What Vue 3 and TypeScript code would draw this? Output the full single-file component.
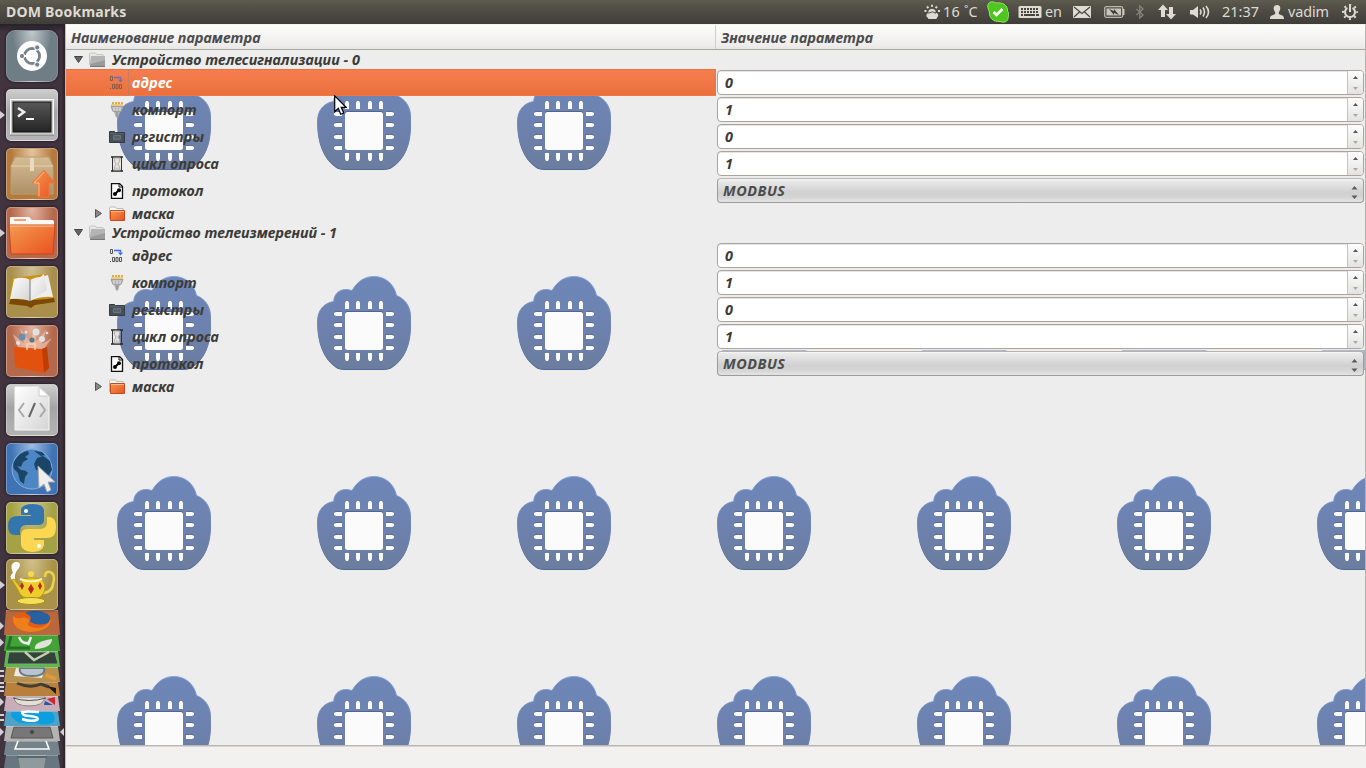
<script setup lang="ts">
import { ref } from 'vue'

interface Param {
  label: string
  width: number
  icon: string
  value: string
  kind: 'spin' | 'combo'
}
interface Group {
  title: string
  width: number
  params: Param[]
}

const makeParams = (): Param[] => [
  { label: 'адрес', width: 40.5, icon: 'address', value: '0', kind: 'spin' },
  { label: 'компорт', width: 64.5, icon: 'port', value: '1', kind: 'spin' },
  { label: 'регистры', width: 72, icon: 'registers', value: '0', kind: 'spin' },
  { label: 'цикл опроса', width: 87, icon: 'cycle', value: '1', kind: 'spin' },
  { label: 'протокол', width: 71.5, icon: 'protocol', value: 'MODBUS', kind: 'combo' },
]

const groups = ref<Group[]>([
  { title: 'Устройство телесигнализации - 0', width: 248, params: makeParams() },
  { title: 'Устройство телеизмерений - 1', width: 225, params: makeParams() },
])
const selected = ref('0-0')

// Spreads a label over the given width by adjusting its letter spacing.
const vFit = {
  mounted(el: HTMLElement, binding: { value: number }) {
    const count = (el.textContent ?? '').trim().length
    const natural = el.getBoundingClientRect().width
    if (count > 0) el.style.letterSpacing = `${(binding.value - natural) / count}px`
  },
}

const pinOffsets = [30, 41, 53, 64]
const sidePins = [38, 49, 61, 72]
</script>

<template>
  <div class="desktop">
    <header class="panel">
      <span v-fit="120.5" class="app-name">DOM Bookmarks</span>
      <div class="indicators">
        <svg class="weather" width="17" height="16" viewBox="0 0 17 16" fill="#dfdbd2">
          <path d="M3.5 13.5a2.4 2.4 0 0 1 .8-4.4 3.6 3.6 0 0 1 6.8-.3 2.6 2.6 0 0 1 2 4.7l-.8 1.5H4.5z" />
          <path d="M4 7.500a4.300 4.300 0 0 1 8 0l-1.500.8a3 3 0 0 0-5 0z" />
          <path d="M8 .8v2M3 2.500l1.400 1.600M13 2.500l-1.400 1.600M.5 7h2M14 7h2" stroke="#dfdbd2" stroke-width="2" />
          <path d="M4.500 9.300q4-3 7.500 0" stroke="#504e47" stroke-width="1" fill="none" />
        </svg>
        <span v-fit="35" class="temp">16 ˚C</span>
        <svg class="skype" width="22" height="22" viewBox="0 0 22 22">
          <path d="M1 7C-.5 1 5-.5 9 2c6-1 12 2 11.500 8 2 2 1 5 .5 7 0 4-4 5-8 3.500C6 21 2 17 2.400 11Z" fill="#4fc61f" stroke="#8de75f" />
          <path d="m6.500 11 3 3 6-6" fill="none" stroke="#fff" stroke-width="2.600" />
        </svg>
        <svg class="keyboard" width="24" height="14" viewBox="0 0 24 14">
          <rect x=".5" y="1" width="23" height="12" rx="1.5" fill="#dfdbd2" />
          <path d="M3 4h18M3 7h18" stroke="#45433e" stroke-width="2" stroke-dasharray="2 1" />
          <path d="M3 10h2M6 10h11M18 10h3" stroke="#45433e" stroke-width="2" />
        </svg>
        <span v-fit="17" class="lang">en</span>
        <svg class="mail" width="18" height="12" viewBox="0 0 18 12">
          <rect width="18" height="12" rx=".8" fill="#dfdbd2" />
          <path d="m1 1 8 6.500L17 1M1 11l5.500-5M17 11l-5.500-5" fill="none" stroke="#45433e" stroke-width="1.100" />
        </svg>
        <svg class="battery" width="21" height="12" viewBox="0 0 21 12">
          <rect x=".7" y=".7" width="18" height="10.600" rx="1.500" fill="none" stroke="#bab6ac" stroke-width="1.300" />
          <rect x="2.500" y="2.500" width="14.500" height="7" fill="#c9c5bb" />
          <path d="M19 3h1.500v6H19z" fill="#c9c5bb" />
          <path d="m5 3 5 2V3l5 6-5-2v2z" fill="#3f3e39" />
        </svg>
        <svg class="bluetooth" width="8" height="14" viewBox="0 0 8 14">
          <path d="m.5 4 6.500 6-3.200 3V1L7 4 .5 10" fill="none" stroke="#87847b" stroke-width="1.300" />
        </svg>
        <svg class="network" width="18" height="16" viewBox="0 0 18 16" fill="#dfdbd2">
          <path d="M5 .5 10 6H7v7H3V6H0zM11 3h4v7h3l-5 5.500L8 10h3z" />
        </svg>
        <svg class="sound" width="20" height="14" viewBox="0 0 20 14">
          <path d="M0 5h3l5-4v12L3 9.500H0z" fill="#dfdbd2" />
          <path d="M10 4.500q2 2.500 0 5M13 2.500q3 4.500 0 9M16 1q5 6 0 12" fill="none" stroke="#dfdbd2" stroke-width="1.600" />
        </svg>
        <span v-fit="37" class="clock">21:37</span>
        <svg class="person" width="14" height="14" viewBox="0 0 14 14" fill="#dfdbd2">
          <path d="M7 0c4 0 4 4 2 7-.8 1.500 0 2.500 2 3s3 1.500 3 4H0c0-2.500 1-3.500 3-4s2.800-1.500 2-3C3 4 3 0 7 0z" />
        </svg>
        <span v-fit="41" class="user">vadim</span>
        <svg class="gear" width="16" height="16" viewBox="0 0 16 16" fill="none" stroke="#dfdbd2">
          <circle cx="8" cy="8" r="7" stroke-width="2" stroke-dasharray="2 3.500" stroke-dashoffset="1" />
          <path d="M5.400 3.800a5 5 0 1 0 5.200 0" stroke-width="2" />
          <path d="M8 0v8" stroke-width="2" />
        </svg>
      </div>
    </header>

    <div class="workspace">
      <nav class="launcher">
        <svg width="0" height="0" class="defs">
          <defs>
            <linearGradient id="orange" x1="0" y1="0" x2="1" y2="1">
              <stop offset="0" stop-color="#f39a50" />
              <stop offset="1" stop-color="#eb5121" />
            </linearGradient>
            <linearGradient id="box" x2="0" y2="1">
              <stop offset="0" stop-color="#d6bd95" />
              <stop offset="1" stop-color="#ae9065" />
            </linearGradient>
            <linearGradient id="screen" x2="0" y2="1">
              <stop offset="0" stop-color="#585858" />
              <stop offset="1" stop-color="#242424" />
            </linearGradient>
            <linearGradient id="page" x2="1" y2="1">
              <stop offset="0" stop-color="#fff" />
              <stop offset="1" stop-color="#d4d4d4" />
            </linearGradient>
          </defs>
        </svg>

        <div class="tile ubuntu">
          <svg viewBox="0 0 52 52">
            <circle cx="26" cy="26" r="15" fill="#fff" />
            <circle cx="26" cy="26" r="7.500" fill="none" stroke="#75838b" stroke-width="3" />
            <path d="M26 26H13M26 26l6.500 11M26 26l6.500-11" stroke="#fff" stroke-width="2" />
            <circle cx="26" cy="26" r="6" fill="#fff" />
            <g fill="#75838b" stroke="#fff">
              <circle cx="16" cy="26" r="2.600" /><circle cx="31.200" cy="17.400" r="2.600" /><circle cx="31.200" cy="34.600" r="2.600" />
            </g>
          </svg>
        </div>
        <div class="tile silver running">
          <svg viewBox="0 0 52 52">
            <rect x="4.500" y="10.500" width="43" height="35" fill="#c9c9c9" stroke="#f8f8f8" />
            <path d="M4 46h44" stroke="#777" />
            <rect x="7" y="13" width="38" height="30" fill="url(#screen)" stroke="#111" />
            <path d="m12 19 6 4-6 4.500" fill="none" stroke="#eee" stroke-width="2.600" />
            <path d="M20 30h8" stroke="#fff" stroke-width="2" />
          </svg>
        </div>
        <div class="tile amber">
          <svg viewBox="0 0 52 52">
            <path d="M9 9h34l4 9v28H5V18z" fill="url(#box)" stroke="#bba074" />
            <path d="M5 18h42" stroke="#e6d2ae" />
            <path d="M24 10h4v13h-4z" fill="#e9dac0" />
            <path d="M38 22 49 35h-6v14H32V35h-6z" fill="url(#orange)" stroke="#ef7643" />
            <path d="M38 24 28 35h5v13" fill="none" stroke="#fcba87" />
          </svg>
        </div>
        <div class="tile rust running">
          <svg viewBox="0 0 52 52">
            <path d="M4 22V11q0-1 1-1h18l3 3h20q2 0 2 2v7z" fill="#f8f7f5" />
            <path d="M8 13h12" stroke="#f5a26e" stroke-width="2" />
            <path d="M3 18h46l-2 29H5z" fill="url(#orange)" stroke="#c94616" />
            <path d="M4 19h44" stroke="#fac38e" />
          </svg>
        </div>
        <div class="tile gold">
          <svg viewBox="0 0 52 52">
            <path d="m6 12 18-2 16-2 9 27-18 4-5 3-5-3-18-1z" fill="#c8930e" />
            <path d="M5 32q11 2 19 2t24-2l1 4-20 3-4 3-4-2-18-2z" fill="#7a4a05" />
            <path d="M8 13q10-3 16 1v21q-8-3-20-2z" fill="url(#page)" />
            <path d="M24 14q5-3 10-3l8-2 5 22q-13-1-23 4z" fill="#eee" />
            <path d="M24 20 38 8l3 16-17 11z" fill="url(#page)" />
            <path d="M24 14v21" stroke="#777" />
          </svg>
        </div>
        <div class="tile rust">
          <svg viewBox="0 0 52 52">
            <path d="M12 22 7 9l11 9-4-15 10 14 5-14 1 14 10-12-4 14 10-6-9 12z" fill="#f5cbb7" opacity=".6" />
            <g fill="#dfe2e3">
              <circle cx="16" cy="12" r="3.500" fill="#6690ad" /><circle cx="30" cy="7" r="3.500" /><circle cx="36" cy="14" r="3" />
              <circle cx="26" cy="15" r="2.500" fill="#58778c" /><circle cx="20" cy="7" r="1.500" /><circle cx="41" cy="8" r="1.300" /><circle cx="12" cy="18" r="2" />
            </g>
            <path d="m8 22 28 2 5-2 2 21-5 5-29-6z" fill="#e2520e" />
            <path d="m36 24 5-2 2 21-5 5z" fill="#be3e07" />
            <path d="M21 25v-6h8v6" fill="none" stroke="#ffd1b0" stroke-width="1.500" />
          </svg>
        </div>
        <div class="tile silver">
          <svg viewBox="0 0 52 52">
            <path d="M9 3h24l10 9v34H9z" fill="url(#page)" stroke="#f8f8f8" />
            <path d="M33 3v9h10z" fill="#fff" stroke="#ccc" />
            <path d="m18 19-5 7 5 7M34 19l5 7-5 7" fill="none" stroke="#aaa" stroke-width="2" />
            <path d="m29 19-6 14" stroke="#666" stroke-width="2" />
          </svg>
        </div>
        <div class="tile blue">
          <svg viewBox="0 0 52 52">
            <circle cx="26" cy="26" r="20" fill="#4d86c4" stroke="#83afdc" />
            <path d="M9 17q5-8 13-9l1 3-4 3 3 2-5 3-2 5-4-1 4 4q5 0 7 3l-3 4-1 7-4-3-2-8-4-4q-2-5 1-9zM28 8l8 1 3 3-4 1zM31 15l6-2 7 5 2 9-4 6-4 3-2-8-6-1-2-6z" fill="#1b4567" />
            <path d="m32 23 1 22 5-4 3 8 4-2-3-8h7z" fill="#eee" stroke="#aaa" />
          </svg>
        </div>
        <div class="tile olive">
          <svg viewBox="0 0 52 52">
            <path d="M15 13V7q2-5 12-5t11 6v10q0 5-6 5H20q-6 0-6 7v3H9q-7 0-7-9 0-10 9-10h14v-1z" fill="#3575ad" />
            <path d="M15 33q0-6 7-6h12q7 0 7-7v-5h3q6 1 6 10 0 11-8 11H28v2h10v5q-1 7-12 7-10-1-11-7z" fill="#fdd652" />
            <circle cx="20" cy="9" r="2" fill="#fff" /><circle cx="33" cy="44" r="2" fill="#fff" />
          </svg>
        </div>
        <div class="tile mustard running">
          <svg viewBox="0 0 52 52">
            <path d="M7 22q-5-5 0-8-4-9 2-11 7-1 4 6-5 5-4 12z" fill="#fff" />
            <path d="M39 18q0-6 5-5 6 2 3 12-1 9-12 9" fill="none" stroke="#ebd34d" stroke-width="2.500" />
            <path d="m6 21 2-1 6 8q0-9 9-9h5q12 0 11 11-2 10-13 10-11 0-14-9z" fill="#eccd2c" stroke="#bd9a16" />
            <ellipse cx="25" cy="42" rx="14" ry="3.500" fill="#f5df58" stroke="#ac8d17" />
            <path d="M14 20q11 5 22 0" fill="none" stroke="#fff5a8" stroke-width="2" />
            <circle cx="25" cy="15" r="3" fill="#f1d950" />
            <path d="m16 23 2 4-2 4-2-4zM25 25l3 5-3 5-3-5zM34 23l2 4-2 4-2-4z" fill="#bd271c" />
          </svg>
        </div>

        <svg class="folded" width="65" height="158" viewBox="0 0 65 158">
          <path d="M6 0h52l2 25H4z" fill="#b9683e" />
          <ellipse cx="32" cy="11" rx="20" ry="10" fill="#e65c14" />
          <path d="M25 3q10-5 23 1 7 9-4 10-8 2-15-3 5-4-4-8z" fill="#2761a0" />
          <path d="M13 6q5 4 11 1 5 2 6 4-4 3-1 5 8 4 16 0 4-3 6-8 0 13-20 14Q12 21 13 6z" fill="#ee7f1d" />

          <path d="M6 25h52l2 16H4z" fill="#43a336" />
          <path d="m11 26-3 12h22" fill="none" stroke="#247024" stroke-width="3" />
          <path d="M19 27q3 7 9 6M31 27l-3 8" fill="none" stroke="#eee" stroke-width="2.500" />
          <path d="M35 39q-2-7 17-10 0 9-17 10z" fill="#dfe3d8" />

          <path d="M6 41h52l2 16H4z" fill="#4ac43d" />
          <path d="M9 42h46l3 12H7z" fill="#32443a" stroke="#8e998d" />
          <path d="m25 42 9 8 15-8" fill="none" stroke="#c2d0b2" stroke-width="2.500" />

          <path d="M6 57h52l2 15H4z" fill="#b7924e" />
          <path d="m16 58-2 8 28 2 2-8z" fill="#ecebe1" />
          <path d="M20 58q-2 8 12 8t12-8z" fill="#bac4cd" stroke="#6b7882" stroke-width="2" />
          <path d="m46 65 10 4" stroke="#e49735" stroke-width="4" />

          <path d="M6 72h52l2 14H4z" fill="#b87f3d" />
          <path d="M17 73q13 6 24 1l8 3" fill="none" stroke="#403e35" stroke-width="3" />
          <path d="m47 76 9 2v6z" fill="#181b19" />

          <path d="M6 86h52l2 15H4z" fill="#c9adb8" />
          <path d="M14 87h31q-1 9-16 9t-15-9z" fill="#e1dfd6" stroke="#8d8488" />
          <path d="M13 88q16 5 33 0" stroke="#555" fill="none" />
          <path d="m47 89 8-2v8z" fill="#cf2431" /><path d="m45 91 8 4h-9z" fill="#2357a0" />

          <path d="M6 101h52l2 15H4z" fill="#51a2c6" />
          <path d="M12 102h40q6 7 0 11-9 3-15 0-18 2-22-3-6-4-3-8z" fill="#0b9fe0" />
          <path d="M39 102q-12-1-17 0 0 4 8 4 10 1 7 4-7 2-15-1" fill="none" stroke="#fff" stroke-width="2.500" />

          <path d="M6 116h52l2 15H4z" fill="#b4b3b2" />
          <path d="M14 117h36l3 11H11z" fill="#777" stroke="#575757" />
          <circle cx="32" cy="122" r="2" fill="#444" />
          <path d="M6 131h52l2 14H4z" fill="#74838a" />
          <path d="m18 131-3 8h34l-3-8" fill="none" stroke="#fff" stroke-width="1.600" />
          <path d="M6 145h52l2 13H4z" fill="#68777f" />
          <path d="M18 145h28l-2 13H20z" fill="#8f999e" /><path d="M17 147h30" stroke="#59666c" stroke-width="2" />
          <path d="M6 .5h52M6 25.500h52M6 41.500h52M6 57.500h52M6 72.500h52M6 86.500h52M6 101.500h52M6 116.500h52M6 131.500h52M6 145.500h52" stroke="#fff" stroke-opacity=".25" />
          <g fill="#d3d0d5">
            <path d="m0 12 4 4-4 4zM0 28.500l4 4-4 4zM0 88l4 4-4 4zM0 118l4 4-4 4zM64 118l-4 4 4 4z" />
            <path d="M0 60h4v2H0zM0 65h4v2H0zM0 72h4v2H0zM0 76h4v2H0zM0 80h4v2H0zM0 104h4v2H0zM0 109h4v2H0z" />
          </g>
        </svg>
      </nav>

      <main class="window">
        <div class="tree-head">
          <div class="head-cell first"><span v-fit="189.5">Наименование параметра</span></div>
          <div class="head-cell"><span v-fit="152">Значение параметра</span></div>
        </div>

        <div class="tree-body">
          <svg class="backdrop" width="1299" height="695">
            <defs>
              <linearGradient id="cloud" x2="0" y2="1">
                <stop offset="0" stop-color="#6d87b8" />
                <stop offset=".45" stop-color="#6d82b0" />
                <stop offset="1" stop-color="#6b7d9f" />
              </linearGradient>
              <linearGradient id="cloudEdge" x2="0" y2="1">
                <stop offset="0" stop-color="#8aa4da" />
                <stop offset=".45" stop-color="#7289ba" />
                <stop offset="1" stop-color="#526894" />
              </linearGradient>
              <pattern id="tiles" x="51" y="26" width="200" height="200" patternUnits="userSpaceOnUse">
                <path d="M.5 46C.5 34 7 27 16.700 25.500 17 17 24 11 35 14.500 41 4 49 .5 57 .5c11 0 20 7 22.500 19C88 23 93.500 30 93.500 41v11C93 70 87 84 74 92q-3 1.500-8 1.500H28q-5 0-8-1.500C7 84 .5 67 .5 46z" fill="url(#cloud)" stroke="url(#cloudEdge)" />
                <rect x="28" y="35" width="38" height="4" rx="2" fill="#53658c" />
                <rect x="28" y="36" width="38" height="38" rx="2.500" fill="#fbfbfb" />
                <g fill="#fbfbfb">
                  <path v-for="x in pinOffsets" :key="'t' + x" :d="`M${x - 2} 33v-6l1-2h2l1 2v6zM${x - 2} 77v6l1 2h2l1-2v-6z`" />
                  <path v-for="y in sidePins" :key="'s' + y" :d="`M25 ${y - 2}h-6l-2 1v2l2 1h6zM69 ${y - 2}h6l2 1v2l-2 1h-6z`" />
                </g>
                <g stroke="#53658c" stroke-opacity=".7">
                  <path v-for="y in sidePins" :key="'e' + y" :d="`M18 ${y - 2.5}h7M69 ${y - 2.5}h7`" />
                </g>
              </pattern>
            </defs>
            <rect width="1299" height="695" fill="url(#tiles)" />
          </svg>

          <div class="rows">
            <template v-for="(group, g) in groups" :key="g">
              <div class="row short">
                <div class="name">
                  <svg class="arrow down" width="9" height="7" viewBox="0 0 9 7"><path d="M.5.5h8L4.500 6.500z" fill="#666" stroke="#444" /></svg>
                  <svg class="folder" width="17" height="16" viewBox="0 0 17 16">
                    <path d="M.5 13V2q0-1 1-1h5l1 1.500H14v2" fill="#e6e6e6" stroke="#c6c6c6" />
                    <path d="M2 4h14v11H1z" fill="#9a9a9a" /><path d="M2 4h14v4L2 12z" fill="#b4b4b4" /><path d="M1 14.500h15" stroke="#777" />
                  </svg>
                  <span v-fit="group.width">{{ group.title }}</span>
                </div>
              </div>
              <div v-for="(p, i) in group.params" :key="i" class="row">
                <div class="name leaf" :class="{ selected: selected === g + '-' + i }" @click="selected = g + '-' + i">
                  <svg class="param-icon" width="16" height="16" viewBox="0 0 16 16">
                    <template v-if="p.icon === 'address'">
                      <path d="M1.500 1.500h2v4h-2z" fill="none" stroke="#555" />
                      <path d="M5 2.500h6.500v2" fill="none" stroke="#3568f0" stroke-width="1.400" /><path d="M9 4.500h5L11.500 7.500z" fill="#3568f0" />
                      <path d="M1 13.500h1M3.500 9.500h2v4h-2zM7 9.500h2v4H7zM10.500 9.500h2v4h-2z" fill="none" stroke="#555" />
                    </template>
                    <template v-else-if="p.icon === 'port'">
                      <path d="M3 1h11" stroke="#e5aa3c" stroke-dasharray="2 1" stroke-width="2" />
                      <path d="M2 2h12v2H2z" fill="#eccb81" /><path d="M2 4.500h12l-2 5H4z" fill="#b8b8b8" stroke="#a0a0a0" />
                      <path d="M5 5v4M8 5v4M11 5v4" stroke="#dedede" /><path d="M5 10h6l-2 5.500H7z" fill="#b4b4b4" /><path d="M8 10v5" stroke="#888" />
                    </template>
                    <template v-else-if="p.icon === 'registers'">
                      <path d="M.5 2.500h5l1 1h9v10H.5z" fill="#485159" stroke="#343c43" />
                      <path d="M1 4.500h14" stroke="#59636b" /><path d="M4.500 6.500h7v4h-7z" fill="#59636a" stroke="#69747a" />
                    </template>
                    <template v-else-if="p.icon === 'cycle'">
                      <path d="M2 1h12M2 15h12" stroke="#222" stroke-width="1.500" />
                      <path d="M3.500 1v14M12.500 1v14" stroke="#333" />
                      <path d="M5 2h6q0 4-2 6 2 2 2 6H5q0-4 2-6-2-2-2-6z" fill="#e4e2d8" stroke="#aaa" />
                      <path d="m6 13 2-2 2 2z" fill="#d4c9a4" />
                    </template>
                    <template v-else>
                      <path d="M2.500.5h8l3 3v12h-11z" fill="#fff" stroke="#111" stroke-width="1.300" />
                      <path d="M10 1v3h3" fill="none" stroke="#111" />
                      <path d="m6 11 4-4" stroke="#000" stroke-width="2" /><circle cx="6" cy="11" r="2" /><circle cx="10" cy="7.300" r="2" />
                    </template>
                  </svg>
                  <span v-fit="p.width">{{ p.label }}</span>
                </div>
                <div class="value" :class="p.kind">
                  <div v-if="p.kind === 'spin'" class="spinbox">
                    <span class="field">{{ p.value }}</span>
                    <span class="steps">
                      <svg width="5" height="3" viewBox="0 0 5 3"><path d="M0 3 2.500 0 5 3z" fill="#555" /></svg>
                      <svg width="5" height="3" viewBox="0 0 5 3"><path d="M0 0h5L2.500 3z" fill="#aaa" /></svg>
                    </span>
                  </div>
                  <div v-else class="combobox">
                    <span v-fit="62.5">{{ p.value }}</span>
                    <svg width="7" height="13" viewBox="0 0 7 13"><path d="M.5 3.500 3.500 0l3 3.500zM.5 9.500h6l-3 3.500z" fill="#5c5c5c" /></svg>
                  </div>
                </div>
              </div>
              <div class="row short">
                <div class="name mask">
                  <svg class="arrow right" width="7" height="9" viewBox="0 0 7 9"><path d="M.5.5v8l6-4z" fill="#888" stroke="#555" /></svg>
                  <svg class="folder" width="17" height="16" viewBox="0 0 17 16">
                    <path d="M.5 13V2q0-1 1-1h5l1 1.500H14v2" fill="#fafafa" stroke="#bbb" />
                    <path d="M1.500 4.500h14v10h-14z" fill="url(#orange)" stroke="#c04b1c" /><path d="M2 5.500h13" stroke="#fabb86" />
                  </svg>
                  <span v-fit="42.5">маска</span>
                </div>
              </div>
            </template>
          </div>
        </div>
        <footer class="status"></footer>
      </main>
    </div>

    <svg class="pointer" width="13" height="21" viewBox="0 0 13 21">
      <path d="M.7.800v16l3.600-3.500 2.400 6 3-1.300-2.500-5.700h4.900z" fill="#fff" stroke="#000" stroke-width="1.200" />
    </svg>
  </div>
</template>

<style>
body {
  overflow: hidden;
}
</style>

<style scoped>
.desktop {
  position: relative;
  display: flex;
  flex-direction: column;
  width: 1366px;
  height: 768px;
  overflow: hidden;
  background: #ededed;
  font-family: "Noto Sans", "Open Sans", sans-serif;
  font-size: 14.4px;
  color: #3c3b37;
}
.desktop * {
  box-sizing: border-box;
}
span {
  white-space: nowrap;
}
svg {
  flex: none;
  display: block;
}
.panel {
  display: flex;
  align-items: center;
  justify-content: space-between;
  flex: none;
  height: 24px;
  padding: 0 8px 0 6px;
  background: linear-gradient(#5d5a4e, #525047 30%, #3e3d38);
  color: #dfdbd2;
}
.app-name {
  font-weight: 700;
  line-height: 24px;
  font-size: 14px;
}
.indicators {
  display: flex;
  align-items: center;
  height: 24px;
}
.indicators span {
  line-height: 24px;
}
.temp { margin-left: 2px; }
.skype { margin-left: 9px; }
.keyboard { margin-left: 9px; }
.lang { margin-left: 3px; }
.mail { margin-left: 11px; }
.battery { margin-left: 13px; }
.bluetooth { margin-left: 11px; }
.network { margin-left: 14px; }
.sound { margin-left: 14px; }
.clock { margin-left: 12px; }
.person { margin-left: 11px; }
.user { margin-left: 4px; }
.gear { margin-left: 13px; }

.workspace {
  display: flex;
  flex: 1;
  min-height: 0;
}
.launcher {
  position: relative;
  display: flex;
  flex-direction: column;
  gap: 7px;
  width: 66px;
  flex: none;
  padding: 6px 0 0 6px;
  background: linear-gradient(#27212a, #41343f 8px, #41343f);
  border-right: 1px solid #c3bebe;
  box-shadow: inset -2px 0 2px #2d232b;
}
.defs {
  position: absolute;
}
.tile {
  position: relative;
  flex: none;
  width: 52px;
  height: 52px;
  border-radius: 5px;
  border: 1px solid rgba(255, 255, 255, 0.3);
  box-shadow: 0 0 2px 1px rgba(25, 15, 25, 0.5);
}
.tile svg {
  width: 52px;
  height: 52px;
  margin: -1px;
}
.tile.ubuntu { background: radial-gradient(ellipse at 50% 0, #c2c9cc, #6f7e86 55%); border-radius: 9px; border-color: rgba(255, 255, 255, 0.15); }
.tile.silver { background: linear-gradient(#cdcdcd, #a4a4a4 45%, #b4b4b4); }
.tile.amber { background: radial-gradient(ellipse at 50% 0, #e5c6a3, #b57a3c 60%); }
.tile.rust { background: radial-gradient(ellipse at 50% 0, #e4b6a3, #b5694c 60%); }
.tile.gold { background: radial-gradient(ellipse at 50% 0, #d2c29a, #aa8e4b 60%); }
.tile.blue { background: radial-gradient(ellipse at 50% 0, #9fbde0, #3f73b3 60%); }
.tile.olive { background: radial-gradient(ellipse at 50% 0, #cbc995, #a5a145 60%); }
.tile.mustard { background: radial-gradient(ellipse at 50% 0, #d1c18a, #a99148 60%); height: 51px; margin-top: -2px; }
.tile.running::before {
  content: "";
  position: absolute;
  left: -7px;
  top: 21px;
  border: 4px solid transparent;
  border-left: 5px solid #d3d0d5;
  border-right: 0;
}
.folded {
  margin: -7px 0 0 -6px;
}

.window {
  display: flex;
  flex-direction: column;
  flex: 1;
  min-width: 0;
  font-weight: 700;
  font-style: italic;
}
.tree-head {
  display: flex;
  flex: none;
  height: 26px;
  background: linear-gradient(#fdfdfc, #eeedec 85%, #e7e6e5);
  border-top: 1px solid #f3f2f1;
  border-bottom: 1px solid #a8a7a0;
  color: #4c4c4c;
  border-right: 1px solid #b5b3ae;
}
.head-cell {
  flex: 1;
  padding-left: 5px;
  line-height: 25px;
}
.head-cell.first {
  flex: none;
  width: 650px;
  border-right: 1px solid #d0cecb;
}
.tree-body {
  position: relative;
  flex: none;
  height: 695px;
  background: #ededed;
  border-right: 1px solid #b5b3ae;
  overflow: hidden;
}
.backdrop {
  position: absolute;
  inset: 0;
}
.rows {
  position: relative;
}
.row {
  display: flex;
  height: 27px;
}
.row.short {
  height: 19px;
}
.name {
  display: flex;
  align-items: center;
  width: 650px;
  flex: none;
  padding-left: 8px;
}
.short .name span {
  line-height: 19px;
}
.arrow.down {
  margin: 0 6px 0 0;
}
.folder {
  margin-right: 6px;
}
.name.mask {
  padding-left: 29px;
}
.arrow.right {
  margin-right: 7px;
}
.name.leaf {
  padding-left: 43px;
}
.param-icon {
  margin-right: 7px;
}
.selected {
  position: relative;
  background: linear-gradient(#f57e4e, #eb703e);
  border: 1px dotted #c67e62;
  border-left: 0;
  color: #fff;
}
.selected::after {
  content: "";
  position: absolute;
  left: 62px;
  top: 0;
  bottom: 0;
  border-left: 1px dotted #99806f;
}
.selected .param-icon {
  opacity: 0.7;
}
.value {
  flex: 1;
  padding: 1px;
}
.value.spin {
  background: #ededed;
}
.value.combo {
  background: rgba(237, 237, 237, 0.5);
}
.spinbox {
  display: flex;
  height: 25px;
  border: 1px solid #a9a49d;
  border-radius: 4px;
  background: #fff;
  overflow: hidden;
  box-shadow: inset 0 1px 0 #e9e4e1;
}
.field {
  flex: 1;
  padding-left: 7px;
  line-height: 23px;
}
.steps {
  display: flex;
  flex-direction: column;
  align-items: center;
  justify-content: space-between;
  width: 16px;
  padding: 5px 0 4px;
  border-left: 1px solid #c5c3c0;
  background: linear-gradient(#fdfdfd, #e3e3e2);
}
.combobox {
  display: flex;
  align-items: center;
  justify-content: space-between;
  height: 25px;
  padding: 0 5px;
  border: 1px solid #9c9c9a;
  border-top-color: #b5b4b1;
  border-radius: 4px;
  background: linear-gradient(#ededed, #d0d0d0 60%, #d5d5d5 80%, #e4e4e4);
  box-shadow: inset 0 1px 0 #f4f4f4;
  color: #4c4c4c;
}
.combobox svg {
  margin-top: 3px;
}
.status {
  flex: 1;
  background: #f2f1f0;
  border-top: 1px solid #b9b7b4;
  box-shadow: inset 0 1px 0 #d8d6d4;
}
.pointer {
  position: absolute;
  left: 334px;
  top: 95px;
}
</style>
